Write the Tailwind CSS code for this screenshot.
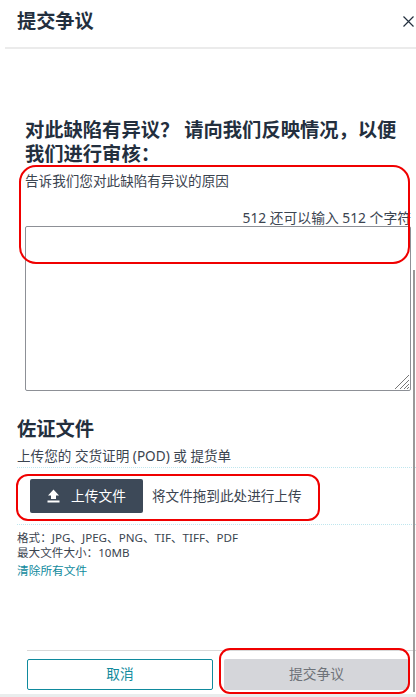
<!DOCTYPE html>
<html lang="zh">
<head>
  <meta charset="UTF-8" />
  <meta name="viewport" content="width=device-width, initial-scale=1.0" />
  <title>提交争议</title>
  <script src="https://cdn.jsdelivr.net/npm/@tailwindcss/browser@4"></script>
</head>
<body class="bg-white overflow-hidden font-['Noto_Sans','Noto_Sans_CJK_SC',sans-serif] text-[#2a3440]">
  <div class="relative w-[416px] h-[697px] overflow-hidden bg-white">

    <!-- header -->
    <div class="ml-[5px] h-[49px] border-b-2 border-[#ebebeb] flex items-center justify-between pl-3">
      <h1 class="text-[19.2px] leading-[24px] font-bold text-[#232f3e] -mt-[5px]">提交争议</h1>
      <svg class="w-[11px] h-[11px] mr-[2px] -mt-[5px]" viewBox="0 0 11 11" fill="none" stroke="#232f3e" stroke-width="1.2"><path d="M0.5 0.5L10.5 10.5M10.5 0.5L0.5 10.5"/></svg>
    </div>

    <!-- dispute reason -->
    <div class="pl-[25px] pr-[5px] pt-[69px]">
      <h2 class="text-[19.3px] leading-[24px] font-bold text-[#232f3e]">对此缺陷有异议？ 请向我们反映情况，以便我们进行审核：</h2>
      <p class="mt-[5px] text-[13.6px] leading-[20px] text-[#3b4450]">告诉我们您对此缺陷有异议的原因</p>
      <p class="mt-[17px] text-[13.8px] leading-[20px] text-right text-[#3b4450] whitespace-nowrap">512 还可以输入 512 个字符</p>
      <div class="relative mt-[-2px] w-[386px] h-[165px]">
        <textarea class="block w-full h-full resize-none border border-[#8d9096] rounded-[2px] bg-white"></textarea>
        <svg class="absolute right-[1px] bottom-[1px] w-[16px] h-[16px]" viewBox="0 0 16 16" fill="none" stroke="#777" stroke-width="1"><path d="M1 15L15 1M6 15L15 6M10 15L15 10M13 15L15 13"/></svg>
      </div>
    </div>

    <!-- supporting documents -->
    <div class="pl-[17px] mt-[26px]">
      <h2 class="text-[19.3px] leading-[24px] font-bold text-[#232f3e]">佐证文件</h2>
      <p class="mt-[5px] text-[13.6px] leading-[20px] text-[#3b4450]">上传您的 交货证明 (POD) 或 提货单</p>
      <div class="mt-[1px] h-[58px] border-y border-dotted border-[#bfe6ee] flex items-center pl-[13px]">
        <button class="w-[113px] h-[34px] bg-[#3d4958] rounded-[2px] flex items-center justify-center gap-[11px] text-[13.7px] text-white">
          <svg class="w-[13px] h-[14px]" viewBox="0 0 13 14" fill="#fff"><path d="M6.5 0.5L12 6.5H9V10H4V6.5H1Z"/><rect x="0.5" y="11.5" width="12" height="2"/></svg>
          <span>上传文件</span>
        </button>
        <span class="ml-[9px] text-[13.6px] text-[#3b4450]">将文件拖到此处进行上传</span>
      </div>
      <p class="mt-[5px] text-[11.6px] leading-[15px] text-[#3b4450]">格式：JPG、JPEG、PNG、TIF、TIFF、PDF</p>
      <p class="text-[11.6px] leading-[15px] text-[#3b4450]">最大文件大小：10MB</p>
      <a class="block mt-[3px] text-[11.7px] leading-[15px] text-[#0f8a9d]">清除所有文件</a>
    </div>

    <!-- footer -->
    <div class="absolute left-[27px] right-0 top-[650px] border-t border-[#d9d9d9] pt-[8px] flex gap-[11px]">
      <button class="w-[186px] h-[31px] border border-[#0f8a9d] rounded-[2px] text-[13.7px] text-[#0f8a9d] bg-white">取消</button>
      <button class="w-[185px] h-[31px] rounded-[2px] text-[13.8px] text-[#6e7278] bg-[#d5d6da]">提交争议</button>
    </div>
    <div class="absolute left-0 right-0 bottom-0 h-[3px] bg-[#e9eded]"></div>

    <!-- scrollbar edge -->
    <div class="absolute right-[1px] top-[270px] h-[422px] w-[2px] bg-[#999]"></div>

    <!-- red annotations -->
    <div class="absolute left-[19px] top-[165px] w-[391px] h-[99px] border-2 border-[#f00000] rounded-[17px]"></div>
    <div class="absolute left-[16px] top-[474px] w-[304px] h-[47px] border-2 border-[#f00000] rounded-[12px]"></div>
    <div class="absolute left-[219px] top-[648px] w-[191px] h-[46px] border-2 border-[#f00000] rounded-[11px]"></div>
  </div>
</body>
</html>
